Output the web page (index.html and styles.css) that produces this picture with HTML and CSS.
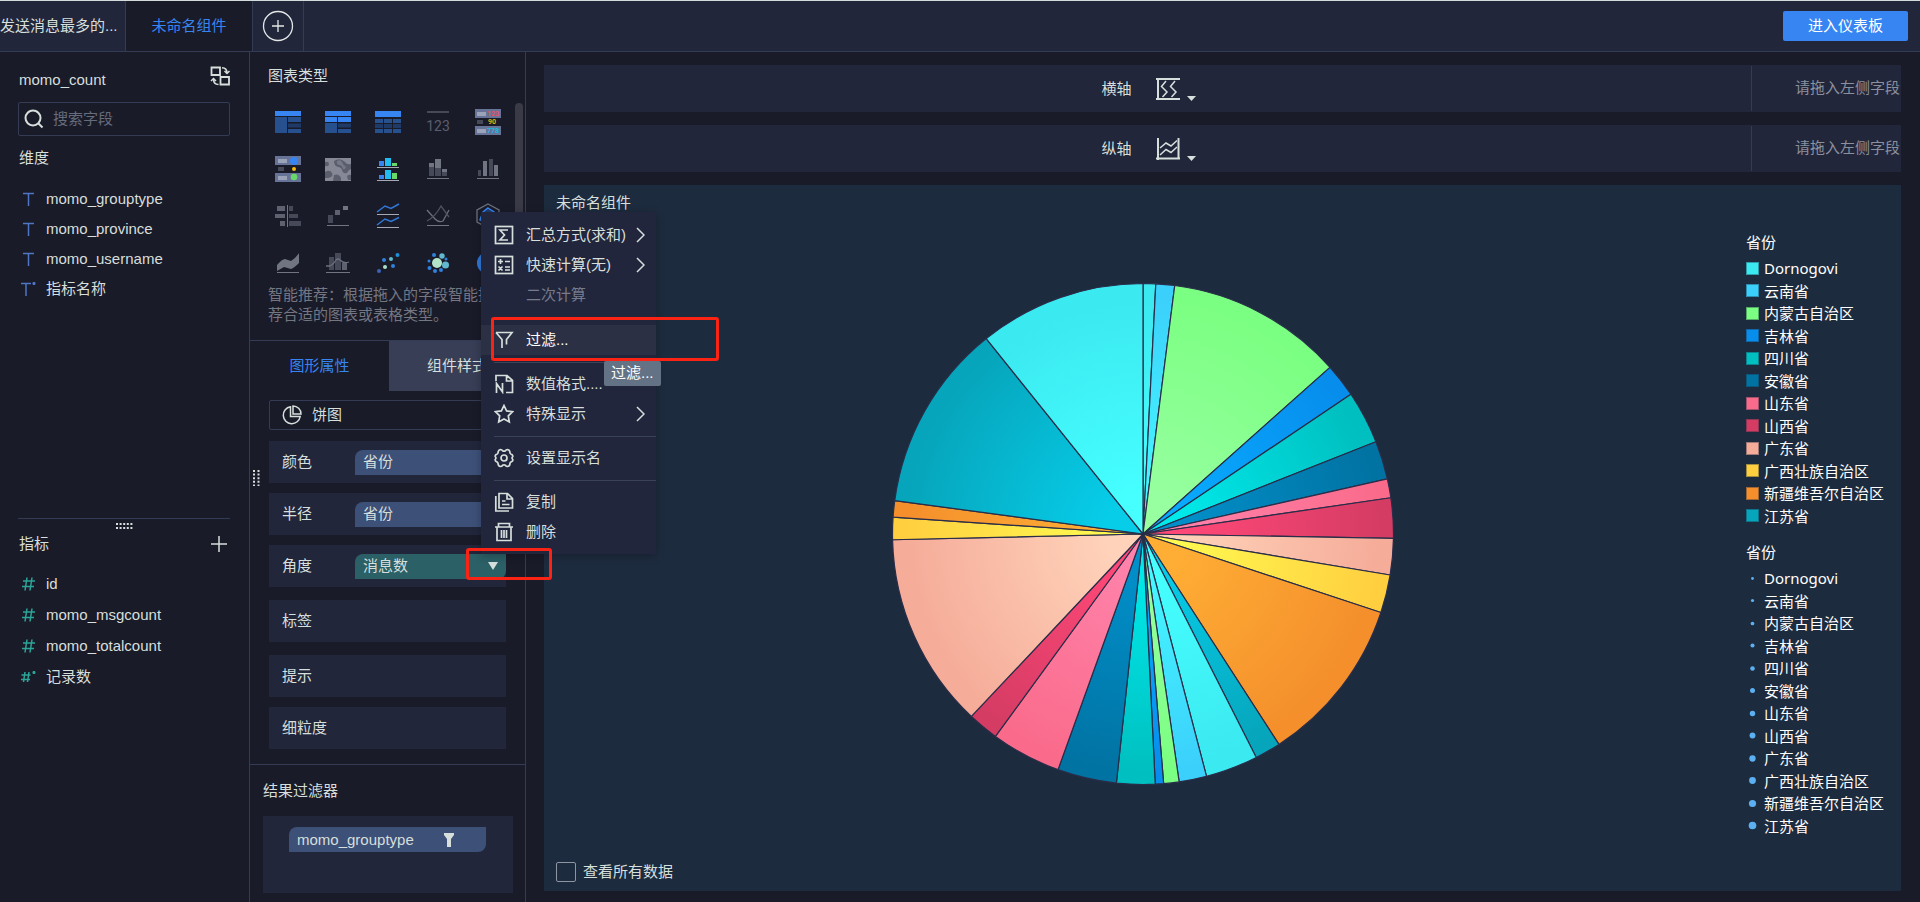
FILE: index.html
```html
<!DOCTYPE html>
<html lang="zh-CN">
<head>
<meta charset="utf-8">
<title>未命名组件</title>
<link rel="stylesheet" href="styles.css">
</head>
<body>
<header class="topbar">
  <nav class="tabs">
    <a class="tab tab-first" href="#">发送消息最多的...</a>
    <a class="tab tab-active" href="#">未命名组件</a>
    <button class="tab-add" type="button" aria-label="添加组件">
      <svg width="32" height="32" viewBox="0 0 32 32"><circle cx="16" cy="16" r="14.5"/><path d="M16 10v12M10 16h12"/></svg>
    </button>
  </nav>
  <button class="enter" type="button">进入仪表板</button>
</header>

<div class="workspace">
  <aside class="fields">
    <section class="dimensions">
      <div class="source">
        <span>momo_count</span>
        <button class="icon-btn" type="button" aria-label="切换数据">
          <svg class="line-icon" width="20" height="20" viewBox="0 0 20 20"><path stroke-width="1.800" d="M1.500 1.500h8.500v7.500H1.500zM10.500 11h8.500v7.500h-8.500z"/><path d="M12 1.800q5 .2 5 5.200M14.500 5l2.500 2.500L19.500 5M8.500 18.500q-5 0-5-5.500M1 15l2.500-2.500L6 15"/></svg>
        </button>
      </div>
      <label class="search">
        <svg width="20" height="20" viewBox="0 0 20 20"><circle cx="9" cy="9" r="7.500"/><path d="M14.500 14.500L18.500 18.500"/></svg>
        <input type="text" placeholder="搜索字段" aria-label="搜索字段">
      </label>
      <h2 class="group-title">维度</h2>
      <ul class="field-list">
        <li><svg class="t-icon" width="18" height="16" viewBox="0 0 18 16"><path d="M3 2.500h11M8.500 2.500v12.500"/></svg>momo_grouptype</li>
        <li><svg class="t-icon" width="18" height="16" viewBox="0 0 18 16"><path d="M3 2.500h11M8.500 2.500v12.500"/></svg>momo_province</li>
        <li><svg class="t-icon" width="18" height="16" viewBox="0 0 18 16"><path d="M3 2.500h11M8.500 2.500v12.500"/></svg>momo_username</li>
        <li><svg class="t-icon" width="18" height="16" viewBox="0 0 18 16"><path d="M1 2.500h10M6 2.500v12.500M14 1v3M12.700 1.700l2.600 1.600M15.300 1.700l-2.600 1.600"/></svg>指标名称</li>
      </ul>
    </section>
    <section class="measures">
      <div class="grip"><svg width="17" height="6" viewBox="0 0 17 6"><path d="M0 1h17M0 5h17"/></svg></div>
      <div class="group-head">
        <h2>指标</h2>
        <button class="icon-btn" type="button" aria-label="添加指标"><svg class="line-icon" width="16" height="16" viewBox="0 0 16 16"><path d="M8 0v16M0 8h16"/></svg></button>
      </div>
      <ul class="field-list measure-list">
        <li><svg class="n-icon" width="18" height="16" viewBox="0 0 18 16"><path d="M7 1.500L5 14.500M12 1.500l-2 13M3 5h12M2 10.500h12"/></svg>id</li>
        <li><svg class="n-icon" width="18" height="16" viewBox="0 0 18 16"><path d="M7 1.500L5 14.500M12 1.500l-2 13M3 5h12M2 10.500h12"/></svg>momo_msgcount</li>
        <li><svg class="n-icon" width="18" height="16" viewBox="0 0 18 16"><path d="M7 1.500L5 14.500M12 1.500l-2 13M3 5h12M2 10.500h12"/></svg>momo_totalcount</li>
        <li><svg class="n-icon" width="18" height="16" viewBox="0 0 18 16"><path d="M5 3L3.500 13M9 3L7.500 13M1.500 6h9M1 10.500h9M14 2v3M12.700 2.700l2.600 1.600M15.300 2.700l-2.600 1.600"/></svg>记录数</li>
      </ul>
    </section>
  </aside>

  <section class="config">
    <div class="side-grip"><svg width="7" height="16" viewBox="0 0 7 16"><path d="M1 0v16M5.500 0v16"/></svg></div>
    <div class="types">
      <h2 class="types-title">图表类型</h2>
      <div class="types-body">
        <div class="type-grid">
          <button type="button" aria-label="分组表"><svg viewBox="0 0 26 26"><path class="c-blue" d="M0 2h26v5H0z"/><path class="c-mid" d="M0 8h12v16H0zM13 8h13v5H13zM13 20h13v4H13z"/><path class="c-deep" d="M13 14.500h13v4H13z"/></svg></button>
          <button type="button" aria-label="交叉表"><svg viewBox="0 0 26 26"><path class="c-blue" d="M0 2h26v5H0zM0 8h12v5H0zM13 8h13v5H13z"/><path class="c-mid" d="M0 14h12v10H0zM13 20h13v4H13z"/><path class="c-deep" d="M13 14.500h13v4H13z"/></svg></button>
          <button type="button" aria-label="明细表"><svg viewBox="0 0 26 26"><path class="c-blue" d="M0 2h26v6H0z"/><path class="c-mid" d="M0 10h8v4H0zM9 10h8v4H9zM18 10h8v4h-8zM0 20h8v4H0zM9 20h8v4H9zM18 20h8v4h-8z"/><path class="c-deep" d="M0 15h8v4H0zM9 15h8v4H9zM18 15h8v4h-8z"/></svg></button>
          <button type="button" aria-label="指标卡"><svg viewBox="0 0 26 26"><path class="c-dim" d="M2 2h22v2H2z"/><text class="num-dim" x="13" y="22">123</text></svg></button>
          <button type="button" aria-label="颜色表格"><svg viewBox="0 0 26 26"><path class="c-slate" d="M0 0h26v9H0zM0 17h26v9H0z"/><path class="c-pale" d="M2 3h9v4H2zM2 20h9v4H2z"/><path class="c-dim" d="M2 11h6v4H2z"/><text class="num" x="18" y="7" fill="#e8505e">123</text><text class="num" x="17" y="15" fill="#e6b012">90</text><text class="num" x="18" y="24" fill="#22b4e8">778</text></svg></button>
          <button type="button" aria-label="热力表格"><svg viewBox="0 0 26 26"><path class="c-slate" d="M0 0h26v9H0zM0 17h26v9H0z"/><path class="c-pale" d="M3 3h9v4H3zM3 20h9v4H3z"/><path class="c-dim" d="M3 11h6v4H3z"/><circle cx="19" cy="5" r="4" fill="#3685f2"/><circle cx="19" cy="13" r="2" fill="#f5b90a"/><circle cx="19" cy="21" r="3.300" fill="#68d869"/></svg></button>
          <button type="button" aria-label="热力图"><svg viewBox="0 0 26 26"><path fill="#878896" d="M0 2h26v23H0z"/><path fill="#5b5f6d" d="M9 5q6-4 11 1 2 3 6 2v5q-3 1-4 4-4 1-5-3-1-3-4-3-4-1-4-6zM0 6q4-1 4 2t-4 2zM0 16q5-3 7 1t-4 5H0zM9 19q5-2 7 3v3H8zM22 20q2-2 4-1v5h-3z"/><path fill="#777987" d="M12 5q4-2 5 1t4 5q-1 3-3 2-1-4-4-4-3-1-2-4z"/></svg></button>
          <button type="button" aria-label="多系列柱状图"><svg viewBox="0 0 26 26"><path fill="#3685f2" d="M4 5h5v5H4zM4 19h5v4H4z"/><path fill="#22bdf0" d="M10 2h6v8h-6zM10 14h6v9h-6z"/><path fill="#68d869" d="M17 7h5v3h-5zM17 17h5v6h-5z"/><path fill="#a5a9b4" d="M2 11h22v1H2zM2 24h22v1H2z"/></svg></button>
          <button type="button" aria-label="堆积柱状图"><svg viewBox="0 0 26 26"><path class="c-gray" d="M4 7h5v4H4zM10 3h6v9h-6zM17 13h5v3h-5z"/><path class="c-dim" d="M4 11h5v9H4zM10 12h6v8h-6zM17 16h5v4h-5z"/><path class="c-gray" d="M2 22h22v1H2z"/></svg></button>
          <button type="button" aria-label="柱状图"><svg viewBox="0 0 26 26"><path class="c-dim" d="M3 14h3v6H3zM14 3h4v17h-4z"/><path class="c-gray" d="M8 5h4v15H8zM19 9h4v11h-4zM2 22h22v1H2z"/></svg></button>
          <button type="button" aria-label="对比柱状图"><svg viewBox="0 0 26 26"><path class="c-gray" d="M12 2h1v22h-1z"/><path fill="#5d6170" d="M2 3h8v5H2zM0 11h10v4H0zM5 18h5v5H5z"/><path class="c-dim" d="M14 3h4v5h-4zM14 11h9v4h-9zM14 18h12v5H14z"/></svg></button>
          <button type="button" aria-label="瀑布图"><svg viewBox="0 0 26 26"><path class="c-dim" d="M3 12h5v8H3z"/><path fill="#5d6170" d="M10 7h5v5h-5z"/><path class="c-gray" d="M18 3h5v4h-5zM2 22h22v1H2z"/></svg></button>
          <button type="button" aria-label="多系列折线图"><svg viewBox="0 0 26 26"><path fill="none" stroke="#3078d8" stroke-width="1.500" d="M2 9l8-6 6 2.500L24 1M2 22l8-6 6 2.500 8-4"/><path fill="#a5a9b4" d="M2 11h22v1H2zM2 24h22v1H2z"/></svg></button>
          <button type="button" aria-label="折线图"><svg viewBox="0 0 26 26"><path class="s-gray" d="M2 7l8 9q4 4 8 2l6-11"/><path class="s-dim" d="M2 18q8-4 14-15l8 11"/><path class="c-gray" d="M2 22h22v1H2z"/></svg></button>
          <button type="button" aria-label="雷达图"><svg viewBox="0 0 26 26"><path class="s-gray" d="M13 1l11 6v12l-11 6-11-6V7z"/><path fill="#1f3c6b" stroke="#3685f2" stroke-width="1.500" d="M13 5l6 4 1 8-7 4-8-4 3-8z"/></svg></button>
          <button type="button" aria-label="面积图"><svg viewBox="0 0 26 26"><path class="c-gray" d="M2 15q5-6 8-6l6 2q5-3 8-8v10q-5 5-8 6l-7-2-7 4zM2 22h22v1H2z"/></svg></button>
          <button type="button" aria-label="组合图"><svg viewBox="0 0 26 26"><path class="c-dim" d="M4 7h5v13H4zM10 3h6v17h-6z"/><path fill="#5d6170" d="M17 13h5v7h-5z"/><path class="s-gray" d="M1 16h4q4-2 6-6 2-2 4 0 4 4 9 2"/><path class="c-gray" d="M1 22h24v1H1z"/></svg></button>
          <button type="button" aria-label="散点图"><svg viewBox="0 0 26 26"><circle cx="4" cy="21" r="2" fill="#3c63b8"/><circle cx="9" cy="10" r="2" fill="#3081dc"/><circle cx="10" cy="17" r="2" fill="#a8e2c8"/><circle cx="16" cy="9" r="2" fill="#61b8cf"/><circle cx="18" cy="16" r="2" fill="#3081dc"/><circle cx="22.500" cy="5" r="2" fill="#1f8fd8"/></svg></button>
          <button type="button" aria-label="气泡图"><svg viewBox="0 0 26 26"><circle cx="12" cy="13" r="5" fill="#b2e4c8"/><circle cx="17" cy="6" r="2.700" fill="#61b8cf"/><circle cx="20.500" cy="15" r="3.500" fill="#61b8cf"/><circle cx="9" cy="5" r="2" fill="#3081dc"/><circle cx="4" cy="11" r="1.500" fill="#3081dc"/><circle cx="4.500" cy="18" r="2" fill="#3081dc"/><circle cx="10" cy="21" r="2" fill="#3081dc"/><circle cx="16" cy="20" r="2" fill="#3081dc"/><circle cx="21" cy="9" r="1.500" fill="#3081dc"/></svg></button>
          <button type="button" aria-label="饼图"><svg viewBox="0 0 26 26"><circle cx="13" cy="13" r="11" fill="#3078d8"/></svg></button>
        </div>
        <div class="scroll-thumb"></div>
      </div>
      <p class="hint">智能推荐：根据拖入的字段智能推荐合适的图表或表格类型。</p>
    </div>

    <div class="prop-tabs">
      <button class="prop-tab prop-active" type="button">图形属性</button>
      <button class="prop-tab" type="button">组件样式</button>
    </div>

    <div class="wells">
      <label class="shape">
        <svg class="line-icon" width="20" height="20" viewBox="0 0 20 20"><path d="M8.500 1.800A8.500 8.500 0 1 0 18.200 11.500H8.500zM11 1v8h8A8 8 0 0 0 11 1z"/></svg>
        <select aria-label="图形"><option>饼图</option></select>
      </label>
      <div class="well"><span class="well-name">颜色</span><span class="pill">省份</span></div>
      <div class="well"><span class="well-name">半径</span><span class="pill">省份</span></div>
      <div class="well well-loose"><span class="well-name">角度</span><span class="pill pill-measure">消息数
        <button class="caret-btn" type="button" aria-label="展开菜单"><svg width="10" height="8" viewBox="0 0 10 8"><path d="M0 0h10L5 8z"/></svg></button></span></div>
      <div class="well well-loose"><span class="well-name">标签</span></div>
      <div class="well"><span class="well-name">提示</span></div>
      <div class="well"><span class="well-name">细粒度</span></div>
    </div>

    <div class="filters">
      <h2>结果过滤器</h2>
      <div class="filter-box">
        <span class="pill filter-pill">momo_grouptype
          <svg width="10" height="14" viewBox="0 0 10 14"><path d="M0 0h10v2L7 6v8H3V6L0 2z"/></svg></span>
      </div>
    </div>
  </section>

  <main class="canvas">
    <div class="axis">
      <div class="axis-main"><span>横轴</span>
        <svg class="line-icon" width="24" height="24" viewBox="0 0 24 24"><path stroke-width="2" d="M0 2h24M0 22h24M2 1v22"/><path d="M10 4L5.500 9.500 11 15l-4.500 5M19 4l-4.500 5.500L20 15l-4.500 5"/></svg>
        <svg class="axis-caret" width="9" height="5" viewBox="0 0 9 5"><path d="M0 0h9L4.500 5z"/></svg>
      </div>
      <div class="axis-drop">请拖入左侧字段</div>
    </div>
    <div class="axis">
      <div class="axis-main"><span>纵轴</span>
        <svg class="line-icon" width="24" height="24" viewBox="0 0 24 24"><path stroke-width="2" d="M2 1v22M0 21.500h24M22.500 1v21"/><path d="M4 11l6-5 5 3 6-5.500M4 18l6-5.500 5 3 6-5.500"/></svg>
        <svg class="axis-caret" width="9" height="5" viewBox="0 0 9 5"><path d="M0 0h9L4.500 5z"/></svg>
      </div>
      <div class="axis-drop">请拖入左侧字段</div>
    </div>
    <section class="chart">
      <h1 class="chart-title">未命名组件</h1>
      <div class="pie-area"><svg id="pie" class="pie" viewBox="-252 -252 504 504" role="img" aria-label="饼图"><defs></defs></svg></div>
      <div class="legends">
        <h2>省份</h2>
        <ul id="colors" class="legend"></ul>
        <h2>省份</h2>
        <ul id="sizes" class="legend"></ul>
      </div>
      <label class="all-data"><input type="checkbox">查看所有数据</label>
    </section>
  </main>
</div>

<div class="menu" role="menu">
  <button type="button" role="menuitem"><svg class="line-icon" width="20" height="20" viewBox="0 0 20 20"><rect x="1.500" y="1.500" width="17" height="17"/><path d="M14 5H6l4.500 5L6 15h8"/></svg><span>汇总方式(求和)</span><svg class="chev" width="9" height="16" viewBox="0 0 9 16"><path d="M1 1l7 7-7 7"/></svg></button>
  <button type="button" role="menuitem"><svg class="line-icon" width="20" height="20" viewBox="0 0 20 20"><rect x="1.500" y="1.500" width="17" height="17"/><path d="M4 6.500h5M6.500 4v5M11 6.500h5M11 12h5M11 15h5M4.500 11.500l4 4M8.500 11.500l-4 4"/></svg><span>快速计算(无)</span><svg class="chev" width="9" height="16" viewBox="0 0 9 16"><path d="M1 1l7 7-7 7"/></svg></button>
  <button class="no-icon" type="button" role="menuitem" disabled><span>二次计算</span></button>
  <hr>
  <button class="hovered" type="button" role="menuitem"><svg class="line-icon" width="20" height="20" viewBox="0 0 20 20"><path d="M2 2.500h16l-5.500 7v5M2 2.500l6 7V18"/></svg><span>过滤...</span></button>
  <hr>
  <button type="button" role="menuitem"><svg class="line-icon" width="20" height="20" viewBox="0 0 20 20"><path d="M2 7V1.500h11l5.500 5v12H12M12.500 2v5h5.500M2.500 19V9.500L8.500 18V9"/></svg><span>数值格式....</span></button>
  <button type="button" role="menuitem"><svg class="line-icon" width="20" height="20" viewBox="0 0 20 20"><path d="M10 1.500l2.600 5.400 6 .8-4.300 4.200 1 6-5.300-2.900-5.300 2.900 1-6L1.400 7.700l6-.8z"/></svg><span>特殊显示</span><svg class="chev" width="9" height="16" viewBox="0 0 9 16"><path d="M1 1l7 7-7 7"/></svg></button>
  <hr>
  <button type="button" role="menuitem"><svg class="line-icon" width="20" height="20" viewBox="0 0 20 20"><path d="M6.500 1.500q1.500 0 2 1.200 1.500.8 3 0 .5-1.200 2-1.200 2.500.5 2.500 3.500.5 1.200 1.800 1.500 1.200 1 1 2-1.500 1.500 0 3 .2 1.500-1 2-1.300.5-1.800 1.700 0 3-2.500 3.300-1.500 0-2-1.200-1.500-.8-3 0-.5 1.200-2 1.200-2.500-.5-2.500-3.300-.5-1.200-1.800-1.700-1.200-.7-1-2 1.500-1.500 0-3-.2-1.200 1-2Q3.500 6.200 4 5q0-3 2.500-3.500z"/><circle cx="10" cy="10" r="3"/></svg><span>设置显示名</span></button>
  <hr>
  <button type="button" role="menuitem"><svg class="line-icon" width="20" height="20" viewBox="0 0 20 20"><path d="M5 1.500h8.500l5 5V16H5zM13 2v5h5M8 9h3.500M8 12.500h7.500M1.800 4v15H15"/></svg><span>复制</span></button>
  <button type="button" role="menuitem"><svg class="line-icon" width="20" height="20" viewBox="0 0 20 20"><path d="M1 5h18M4.500 5V1.500h11V5M3 5v13.500h14V5M7.500 8v8M12.500 8v8M10 8v8"/></svg><span>删除</span></button>
</div>
<div class="mark mark-filter"></div>
<div class="mark mark-caret"></div>
<div class="tooltip" role="tooltip">过滤...</div>
<script src="chart.js"></script>
</body>
</html>
```
FILE: styles.css
```css
* { box-sizing: border-box; }

body {
  margin: 0;
  min-height: 100vh;
  display: flex;
  flex-direction: column;
  position: relative;
  background: #1a1b29;
  color: #d6dfdc;
  font: 15px/20px "Liberation Sans", "Noto Sans CJK SC", sans-serif;
}

h1, h2, p, ul { margin: 0; padding: 0; font-size: 15px; font-weight: 400; }
ul { list-style: none; }
button, input, select { font: inherit; color: inherit; background: none; border: 0; padding: 0; margin: 0; }
svg { display: block; flex: none; }
.line-icon { fill: none; stroke: #d6dfdc; stroke-width: 1.5; }

/* Top bar */
.topbar {
  display: flex;
  justify-content: space-between;
  align-items: center;
  height: 52px;
  padding-right: 12px;
  background: #21263b;
  border-top: 1px solid #d3dcda;
  border-bottom: 1px solid #343c55;
}
.tabs { display: flex; align-self: stretch; }
.tab {
  display: flex;
  align-items: center;
  justify-content: center;
  width: 126px;
  border-right: 1px solid #343c55;
  color: #d6dfdc;
  text-decoration: none;
  white-space: nowrap;
}
.tab-first { justify-content: flex-start; }
.tab-active { width: 127px; background: #1a1b29; color: #3685f2; }
.tab-add { width: 51px; display: flex; align-items: center; justify-content: center; border-right: 1px solid #343c55; }
.tab-add svg { fill: none; stroke: #e3e8e6; stroke-width: 1.3; }
.enter { width: 125px; height: 30px; border-radius: 2px; background: #3685f2; color: #fff; }

.workspace { flex: 1; display: flex; }

/* Field list */
.fields { width: 250px; flex: none; padding: 0 19px 0 18px; border-right: 1px solid #343c55; }
.dimensions { height: 467px; padding-top: 14px; border-bottom: 1px solid #343c55; }
.source { display: flex; justify-content: space-between; align-items: flex-start; padding: 0 0 0 1px; height: 36px; }
.source span { line-height: 28px; }
.search {
  display: flex;
  align-items: center;
  gap: 9px;
  height: 34px;
  padding-left: 5px;
  border: 1px solid #343c55;
  border-radius: 2px;
}
.search svg { fill: none; stroke: #d6dfdc; stroke-width: 2; }
.search input { width: 100%; min-width: 0; height: 30px; padding-bottom: 2px; outline: 0; }
.search input::placeholder { color: #666c7c; opacity: 1; }
.group-title { padding: 12px 0 10px 1px; }
.field-list { padding-top: 6px; }
.field-list li { display: flex; align-items: center; gap: 8px; height: 30px; padding-left: 2px; }
.t-icon, .n-icon { fill: none; stroke-width: 1.5; stroke: #4e76c4; }
.n-icon { stroke: #2ba598; }
.grip { display: flex; justify-content: center; padding-top: 4px; }
.grip path, .side-grip path { fill: none; stroke: #d6dfdc; stroke-width: 2; stroke-dasharray: 2 1.6; }
.group-head { display: flex; justify-content: space-between; align-items: center; padding: 5px 3px 0 1px; }
.measure-list { padding-top: 14px; }
.measure-list li { height: 31px; }

/* Chart configuration */
.config { position: relative; width: 276px; flex: none; border-right: 1px solid #343c55; }
.side-grip { position: absolute; left: 3px; top: 418px; }
.types { padding: 14px 0 15px; border-bottom: 1px solid #343c55; }
.types-title { padding-left: 18px; }
.types-body { display: flex; gap: 2px; padding: 17px 0 0 13px; height: 190px; }
.type-grid { display: grid; grid-template-columns: repeat(5, 50px); grid-auto-rows: 26px; row-gap: 21px; padding-top: 6px; }
.type-grid button { display: flex; justify-content: center; }
.type-grid svg { width: 26px; height: 26px; }
.scroll-thumb { width: 8px; height: 130px; border-radius: 4px; background: #393a46; }
.hint { width: 250px; padding: 9px 0 0 18px; color: #747682; }
.c-blue { fill: #3685f2; }
.c-mid { fill: #27508f; }
.c-deep { fill: #1f3a66; }
.c-dim { fill: #454958; }
.c-gray { fill: #717481; }
.c-slate { fill: #677497; }
.c-pale { fill: #9ba3b8; }
.s-gray { fill: none; stroke: #6c707e; stroke-width: 1.3; }
.s-dim { fill: none; stroke: #4e5260; stroke-width: 1.3; }
.num-dim { font: 14px Roboto, sans-serif; fill: #5a5e6d; text-anchor: middle; }
.num { font: bold 7px Roboto, sans-serif; text-anchor: middle; }

.prop-tabs { display: flex; height: 50px; }
.prop-tab { flex: 1; background: #373e55; }
.prop-active { flex: none; width: 139px; background: none; color: #3685f2; }

.wells { padding: 9px 18px 0 18px; border-bottom: 1px solid #343c55; height: 374px; }
.shape {
  display: flex;
  align-items: center;
  gap: 10px;
  height: 30px;
  margin: 0 1px 11px;
  padding-left: 12px;
  border: 1px solid #343c55;
  border-radius: 2px;
}
.shape select { flex: 1; appearance: none; }
.well {
  display: flex;
  align-items: center;
  height: 42px;
  margin: 0 1px 10px;
  padding-left: 13px;
  background: #21263b;
}
.well-loose { margin-bottom: 13px; }
.well-name { width: 73px; }
.pill {
  display: flex;
  align-items: center;
  justify-content: space-between;
  flex: 1;
  height: 25px;
  padding: 0 8px;
  border-radius: 8px 0 8px 0;
  background: #3d5078;
}
.pill-measure { background: #2b6066; }
.pill svg { fill: #d6dfdc; }
.caret-btn { display: flex; }
.filters { padding: 16px 12px 8px 13px; }
.filter-box { height: 77px; margin-top: 15px; padding: 11px 27px 0 26px; background: #21263b; }
.filter-pill { padding-right: 32px; }

/* Canvas */
.canvas { flex: 1; min-width: 0; display: flex; flex-direction: column; gap: 13px; padding: 13px 19px 11px 18px; }
.axis { display: flex; height: 47px; background: #21263b; }
.axis-main { flex: 1; display: flex; align-items: center; justify-content: center; padding-left: 2px; }
.axis-main span { margin-right: 24px; }
.axis-caret { align-self: flex-end; margin: 0 0 11px 7px; fill: #d6dfdc; }
.axis-drop {
  width: 150px;
  margin: 1px 0;
  padding: 12px 1px 0 0;
  border-left: 1px solid #343c55;
  text-align: right;
  color: #8b909d;
}
.chart {
  flex: 1;
  display: grid;
  grid-template: 36px 1fr 44px / 1fr 159px;
  background: #1d2b3e;
}
.chart-title { grid-column: 1 / 3; padding: 8px 12px 0; }
.pie-area { display: flex; align-items: center; justify-content: center; }
.pie { width: 504px; height: 504px; }
.pie path { stroke: #292d49; stroke-width: 1.2; stroke-linejoin: round; }
.legends { padding: 11px 0 0 4px; color: #fff; font-family: "Noto Sans", "Noto Sans CJK SC", sans-serif; }
.legends h2 { line-height: 20px; padding-bottom: 5px; }
.legend { display: grid; grid-auto-rows: 1fr; height: 270px; }
.legend + h2 { margin-top: 15px; }
.legend li { display: flex; align-items: center; gap: 5px; line-height: 20px; }
.swatch { width: 13px; height: 13px; flex: none; border: 1px solid rgba(29, 43, 62, 0.4); }
.size { width: 13px; height: 13px; fill: #5cb0f2; }
.all-data { grid-column: 1 / 3; display: flex; align-items: center; gap: 7px; padding: 6px 12px 0; }
.all-data input { appearance: none; width: 20px; height: 20px; border: 1px solid #8e94a2; border-radius: 2px; }

/* Field context menu */
.menu {
  position: absolute;
  left: 481px;
  top: 212px;
  width: 175px;
  padding: 8px 0 7px;
  background: #22263c;
  box-shadow: 0 2px 8px rgba(0, 0, 0, 0.25);
}
.menu button { display: flex; align-items: center; width: 100%; height: 30px; padding: 0 11px 0 13px; gap: 12px; text-align: left; white-space: nowrap; }
.menu .line-icon { stroke-width: 1.7; }
.menu span { flex: 1; min-width: 0; }
.menu hr { height: 1px; margin: 7px 0 6px 13px; border: 0; background: #3b435b; }
.menu .no-icon { padding-left: 45px; color: #757b8c; }
.menu .no-icon + hr { margin-bottom: 7px; }
.menu .hovered { background: #2c3045; color: #fff; }
.chev { fill: none; stroke: #d6dfdc; stroke-width: 1.5; }

.mark { position: absolute; border: 3px solid #fb2314; border-radius: 3px; pointer-events: none; }
.mark-filter { left: 491px; top: 317px; width: 228px; height: 44px; }
.mark-caret { left: 466px; top: 548px; width: 86px; height: 32px; }
.tooltip {
  position: absolute;
  left: 604px;
  top: 361px;
  padding: 2px 7px 3px;
  border-radius: 2px;
  background: #647286;
  color: #fff;
}
```
FILE: chart.js
```javascript
const SVG = "http://www.w3.org/2000/svg";
const RADIUS = 250.5;

// name, rim colour, centre colour
const provinces = [
  ["Dornogovi", "#3be9f0", "#46ffff"],
  ["云南省", "#3bd0fb", "#46f8ff"],
  ["内蒙古自治区", "#7bff82", "#97ffa0"],
  ["吉林省", "#078eec", "#08abff"],
  ["四川省", "#00bfc0", "#00e9ea"],
  ["安徽省", "#0173a3", "#018fc9"],
  ["山东省", "#fa6b8b", "#ff82aa"],
  ["山西省", "#d53c64", "#ff4878"],
  ["广东省", "#f5ac99", "#ffd2b9"],
  ["广西壮族自治区", "#ffcf40", "#fff950"],
  ["新疆维吾尔自治区", "#f48f2c", "#ffae35"],
  ["江苏省", "#06a5bb", "#07cde9"]
];

// End angle of each slice, clockwise from the top
const ends = [2.93, 7.28, 48.29, 56.1, 68.4, 77.28, 81.68, 91, 99.42, 108.26,
  147.13, 153.12, 165.31, 171.7, 175.27, 177.2, 186.1, 199.83, 216.1, 223.25,
  268.69, 273.86, 277.67, 321.26, 360];

function make(tag, attrs, parent) {
  const el = document.createElementNS(SVG, tag);
  for (const key in attrs) el.setAttribute(key, attrs[key]);
  parent.appendChild(el);
  return el;
}

function rim(deg) {
  const a = deg * Math.PI / 180;
  return (RADIUS * Math.sin(a)).toFixed(2) + " " + (-RADIUS * Math.cos(a)).toFixed(2);
}

const pie = document.getElementById("pie");
const defs = pie.querySelector("defs");
provinces.forEach(([, outer, inner], i) => {
  const g = make("radialGradient", { id: "g" + i, gradientUnits: "userSpaceOnUse", cx: 0, cy: 0, r: RADIUS }, defs);
  make("stop", { offset: 0, "stop-color": inner }, g);
  make("stop", { offset: 0.15, "stop-color": inner }, g);
  make("stop", { offset: 0.95, "stop-color": outer }, g);
});

let start = 0;
ends.forEach((end, i) => {
  make("path", {
    d: `M0 0L${rim(start)}A${RADIUS} ${RADIUS} 0 0 1 ${rim(end)}Z`,
    fill: `url(#g${i % provinces.length})`
  }, pie);
  start = end;
});

const colors = document.getElementById("colors");
const sizes = document.getElementById("sizes");
provinces.forEach(([name, outer], i) => {
  const row = document.createElement("li");
  const swatch = document.createElement("span");
  swatch.className = "swatch";
  swatch.style.backgroundColor = outer;
  row.append(swatch, name);
  colors.append(row);

  const sizeRow = document.createElement("li");
  const dot = make("svg", { class: "size", viewBox: "0 0 13 13" }, sizeRow);
  make("circle", { cx: 6.5, cy: 6.5, r: 1.4 + i * 0.22 }, dot);
  sizeRow.append(name);
  sizes.append(sizeRow);
});
```
